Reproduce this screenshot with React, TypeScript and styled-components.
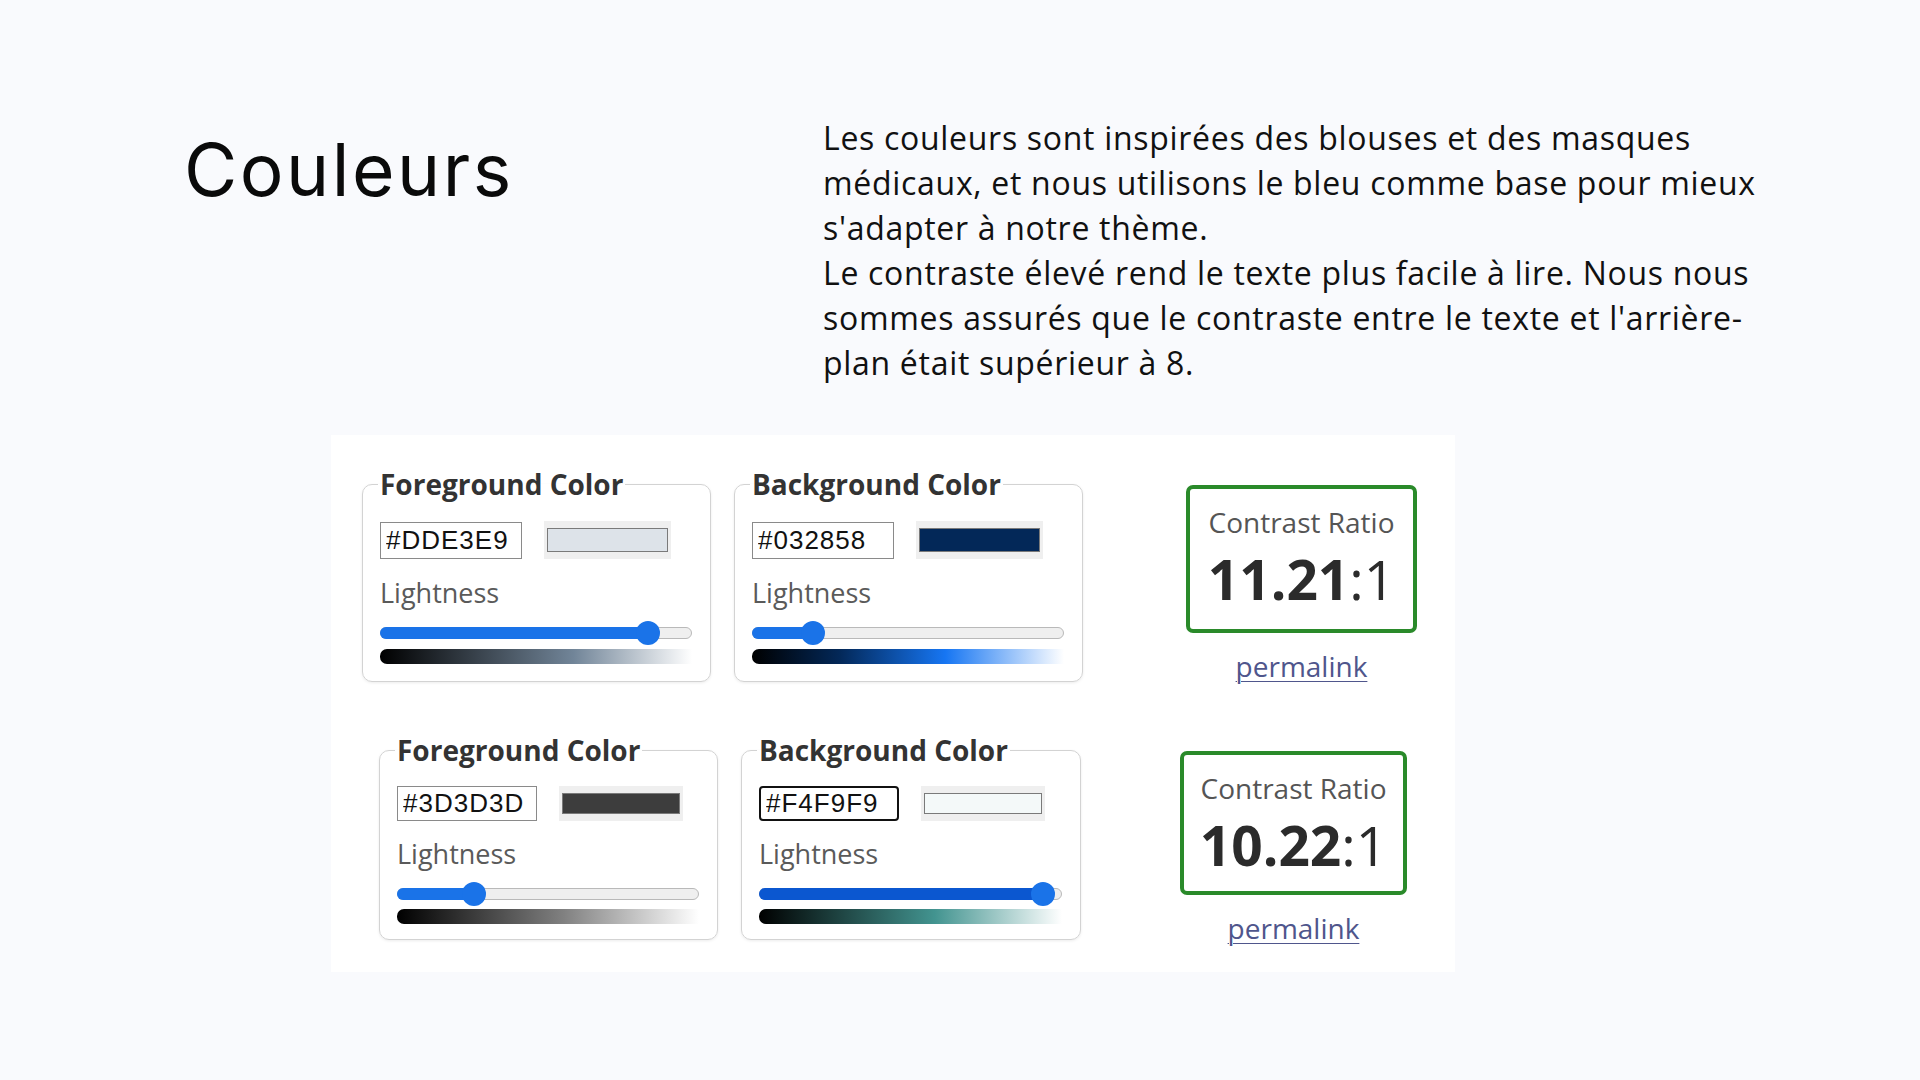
import styled, { createGlobalStyle } from "styled-components";

const GlobalStyle = createGlobalStyle`
  html, body {
    margin: 0;
    padding: 0;
  }
  body {
    background: #f9fafd;
    font-family: "Open Sans", "Noto Sans", sans-serif;
    color: #111;
  }
`;

interface Swatch {
  legend: string;
  hex: string;
  color: string;
  value: number;
  fill: string;
  stops: string;
  focused?: boolean;
  width: number;
}

interface RowData {
  inset: number;
  resultGap: number;
  boxWidth: number;
  boxHeight: number;
  dense: boolean;
  ratio: string;
  fields: Swatch[];
}

const rows: RowData[] = [
  {
    inset: 31,
    resultGap: 103,
    boxWidth: 231,
    boxHeight: 148,
    dense: false,
    ratio: "11.21",
    fields: [
      {
        legend: "Foreground Color",
        hex: "#DDE3E9",
        color: "#dde3e9",
        value: 0.89,
        fill: "#1a73e8",
        stops: "#000 0%, hsl(210 16% 52%) 62%, #fff 100%",
        width: 349,
      },
      {
        legend: "Background Color",
        hex: "#032858",
        color: "#032858",
        value: 0.17,
        fill: "#1a73e8",
        stops: "#000 0%, #032858 28%, hsl(214 90% 52%) 62%, #fff 100%",
        width: 349,
      },
    ],
  },
  {
    inset: 48,
    resultGap: 99,
    boxWidth: 227,
    boxHeight: 144,
    dense: true,
    ratio: "10.22",
    fields: [
      {
        legend: "Foreground Color",
        hex: "#3D3D3D",
        color: "#3d3d3d",
        value: 0.235,
        fill: "#1a73e8",
        stops: "#000 0%, #808080 55%, #fff 100%",
        width: 339,
      },
      {
        legend: "Background Color",
        hex: "#F4F9F9",
        color: "#f4f9f9",
        value: 0.975,
        fill: "#0b57d0",
        stops: "#000 0%, hsl(177 38% 42%) 58%, #fff 100%",
        focused: true,
        width: 340,
      },
    ],
  },
];

const Page = styled.main`
  width: 1920px;
  height: 1080px;
  box-sizing: border-box;
  padding-top: 115px;
  overflow: hidden;
`;

const Header = styled.header`
  display: grid;
  grid-template-columns: 639px 950px;
  padding-left: 184px;
`;

const Title = styled.h1`
  margin: 11px 0 0;
  font-family: Inter, "Noto Sans", sans-serif;
  font-weight: 400;
  font-size: 73px;
  line-height: 1.2;
  letter-spacing: 2.5px;
  color: #0a0a0a;
`;

const Intro = styled.div`
  font-size: 32px;
  line-height: 45px;
  letter-spacing: 0.7px;
  color: #111;

  p {
    margin: 0;
  }
`;

const Panel = styled.section`
  margin: 50px 0 0 331px;
  width: 1124px;
  height: 537px;
  box-sizing: border-box;
  padding-top: 34px;
  background: #fff;
  display: flex;
  flex-direction: column;
  gap: 50px;
`;

const Row = styled.div<{ $inset: number }>`
  display: flex;
  align-items: flex-start;
  padding-left: ${(p) => p.$inset}px;
`;

const Fields = styled.div`
  display: flex;
  gap: 23px;
`;

const Card = styled.fieldset<{ $width: number; $dense: boolean }>`
  margin: 0;
  width: ${(p) => p.$width}px;
  box-sizing: border-box;
  padding: ${(p) => (p.$dense ? "21px 18px 15px 17px" : "22px 18px 17px 17px")};
  border: 1px solid #d3d3d3;
  border-radius: 10px;
  box-shadow: 0 1px 3px rgba(0, 0, 0, 0.08);
  display: flex;
  flex-direction: column;
`;

const Legend = styled.legend`
  padding: 0 2px;
  margin-left: -2px;
  font-size: 28px;
  line-height: 30px;
  font-weight: 700;
  color: #333;
`;

const HexRow = styled.div`
  display: flex;
  align-items: center;
  gap: 22px;
`;

const HexInput = styled.input<{ $focused?: boolean; $dense: boolean }>`
  width: ${(p) => (p.$dense ? 140 : 142)}px;
  height: ${(p) => (p.$dense ? 35 : 37)}px;
  box-sizing: border-box;
  margin: 0;
  padding: 0 5px;
  border: ${(p) => (p.$focused ? "2px solid #111" : "1px solid #8a8a8a")};
  border-radius: ${(p) => (p.$focused ? "4px" : "0")};
  background: #fff;
  font-family: "Liberation Sans", Arial, sans-serif;
  font-size: 26px;
  letter-spacing: 1px;
  color: #111;
  outline: none;
`;

const SwatchFrame = styled.div<{ $dense: boolean }>`
  width: ${(p) => (p.$dense ? 124 : 127)}px;
  height: ${(p) => (p.$dense ? 35 : 38)}px;
  box-sizing: border-box;
  padding: 7px 3px;
  background: #efefef;
  display: flex;
`;

const SwatchColor = styled.div<{ $color: string }>`
  flex: 1;
  border: 1px solid #7a7a7a;
  background: ${(p) => p.$color};
`;

const Label = styled.div<{ $dense: boolean }>`
  margin-top: ${(p) => (p.$dense ? 15 : 16)}px;
  font-size: 27px;
  line-height: 36px;
  color: #5a5a5a;
`;

const Slider = styled.div`
  position: relative;
  margin-top: 10px;
  height: 24px;
  display: flex;
  align-items: center;
`;

const Track = styled.div`
  position: relative;
  width: 100%;
  height: 12px;
  box-sizing: border-box;
  border: 1px solid #b9b9b9;
  border-radius: 6px;
  background: #efefef;
`;

const Fill = styled.div<{ $color: string }>`
  position: absolute;
  left: -1px;
  top: -1px;
  height: 12px;
  border-radius: 6px;
  background: ${(p) => p.$color};
`;

const Thumb = styled.div`
  position: absolute;
  top: 50%;
  width: 24px;
  height: 24px;
  border-radius: 50%;
  background: #1a73e8;
  transform: translate(-50%, -50%);
`;

const Gradient = styled.div<{ $stops: string; $dense: boolean }>`
  margin-top: ${(p) => (p.$dense ? 3 : 4)}px;
  height: 15px;
  border-radius: 7px 0 0 7px;
  background: linear-gradient(to right, ${(p) => p.$stops});
`;

const Result = styled.div<{ $gap: number }>`
  margin: 16px 0 0 ${(p) => p.$gap}px;
  display: flex;
  flex-direction: column;
  align-items: center;
`;

const RatioBox = styled.div<{ $w: number; $h: number }>`
  width: ${(p) => p.$w}px;
  height: ${(p) => p.$h}px;
  box-sizing: border-box;
  padding-top: 16px;
  border: 4px solid #2a8a2a;
  border-radius: 7px;
  display: flex;
  flex-direction: column;
  align-items: center;
`;

const RatioLabel = styled.div`
  font-size: 28px;
  line-height: 34px;
  color: #555;
`;

const RatioValue = styled.div`
  margin-top: 6px;
  font-size: 55px;
  line-height: 67px;
  color: #2b2b2b;

  b {
    font-weight: 700;
  }

  span {
    font-weight: 400;
  }
`;

const Permalink = styled.a`
  margin-top: 14px;
  font-size: 28px;
  line-height: 38px;
  color: #4f568c;
  text-decoration: underline;
  text-underline-offset: 4px;
  text-decoration-thickness: 1px;
`;

function ColorField({ field, dense }: { field: Swatch; dense: boolean }) {
  // thumb centre sits between 12px and (width - 12px)
  const pos = `calc(12px + ${field.value} * (100% - 24px))`;
  return (
    <Card $width={field.width} $dense={dense}>
      <Legend>{field.legend}</Legend>
      <HexRow>
        <HexInput
          readOnly
          value={field.hex}
          $focused={field.focused}
          $dense={dense}
        />
        <SwatchFrame $dense={dense}>
          <SwatchColor $color={field.color} />
        </SwatchFrame>
      </HexRow>
      <Label $dense={dense}>Lightness</Label>
      <Slider role="slider" aria-valuenow={Math.round(field.value * 100)}>
        <Track>
          <Fill $color={field.fill} style={{ width: pos }} />
        </Track>
        <Thumb style={{ left: pos }} />
      </Slider>
      <Gradient $stops={field.stops} $dense={dense} />
    </Card>
  );
}

export default function App() {
  return (
    <>
      <GlobalStyle />
      <Page>
        <Header>
          <Title>Couleurs</Title>
          <Intro>
            <p>
              Les couleurs sont inspirées des blouses et des masques
              médicaux, et nous utilisons le bleu comme base pour mieux
              s'adapter à notre thème.
            </p>
            <p>
              Le contraste élevé rend le texte plus facile à lire. Nous nous
              sommes assurés que le contraste entre le texte et
              l'arrière-plan était supérieur à 8.
            </p>
          </Intro>
        </Header>

        <Panel>
          {rows.map((row) => (
            <Row key={row.ratio} $inset={row.inset}>
              <Fields>
                {row.fields.map((f) => (
                  <ColorField key={f.legend} field={f} dense={row.dense} />
                ))}
              </Fields>
              <Result $gap={row.resultGap}>
                <RatioBox $w={row.boxWidth} $h={row.boxHeight}>
                  <RatioLabel>Contrast Ratio</RatioLabel>
                  <RatioValue>
                    <b>{row.ratio}</b>
                    <span>:1</span>
                  </RatioValue>
                </RatioBox>
                <Permalink href="#">permalink</Permalink>
              </Result>
            </Row>
          ))}
        </Panel>
      </Page>
    </>
  );
}
